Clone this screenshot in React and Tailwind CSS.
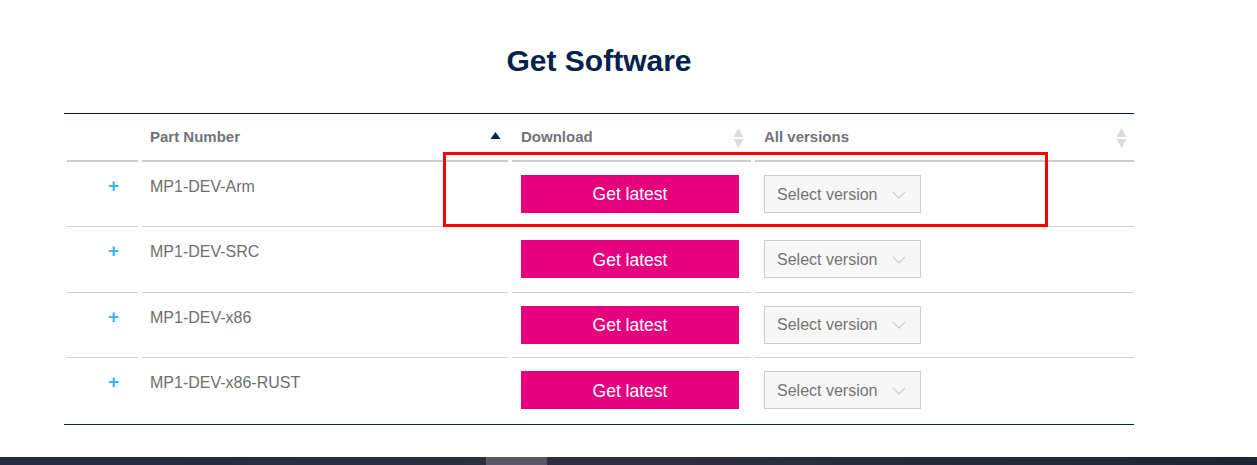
import React from "react";

const rows = ["MP1-DEV-Arm", "MP1-DEV-SRC", "MP1-DEV-x86", "MP1-DEV-x86-RUST"];

function SortBoth() {
  return (
    <svg width="11" height="20" viewBox="0 0 11 20" className="shrink-0">
      <path d="M5.5 0 L10.5 9 L0.5 9 Z" fill="#dcdcdc" />
      <path d="M0.5 11 L10.5 11 L5.5 20 Z" fill="#dcdcdc" />
    </svg>
  );
}

function SortUp() {
  return (
    <svg width="11" height="7" viewBox="0 0 11 7" className="shrink-0 mb-[5px]">
      <path d="M5.5 0 L10.5 7 L0.5 7 Z" fill="#03234b" />
    </svg>
  );
}

function Chevron() {
  return (
    <svg width="14" height="8" viewBox="0 0 14 8">
      <path d="M1 1 L7 7 L13 1" fill="none" stroke="#cfcfcf" strokeWidth="1.3" />
    </svg>
  );
}

export default function App() {
  const cols = "grid grid-cols-[71px_366px_239px_379px] gap-x-[4px] pl-[3px]";
  return (
    <div className="w-[1257px] h-[465px] bg-white relative overflow-hidden flex flex-col" style={{ fontFamily: '"Liberation Sans", Arial, sans-serif' }}>
      <div className="ml-[64px] w-[1070px] flex flex-col">
        <h1 className="text-center text-[30px] font-bold text-[#03234b] pt-[43px] leading-[36px] h-[113px]">
          Get Software
        </h1>
        <div className="border-t border-b border-[#03234b] relative">
          {/* header */}
          <div className={cols}>
            <div className="h-[48px] border-b-2 border-[#cdcdcd]" />
            <div className="h-[48px] border-b-2 border-[#cdcdcd] flex items-center justify-between pl-[8px] pr-[7px] pt-[1px]">
              <span className="text-[15px] font-bold text-[#727379]">Part Number</span>
              <SortUp />
            </div>
            <div className="h-[48px] border-b-2 border-[#cdcdcd] flex items-center justify-between pl-[9px] pr-[7px] pt-[1px]">
              <span className="text-[15px] font-bold text-[#727379]">Download</span>
              <SortBoth />
            </div>
            <div className="h-[48px] border-b-2 border-[#cdcdcd] flex items-center justify-between pl-[9px] pr-[7px] pt-[1px]">
              <span className="text-[15px] font-bold text-[#727379]">All versions</span>
              <SortBoth />
            </div>
          </div>
          {rows.map((name, i) => {
            const last = i === rows.length - 1;
            const b = last ? "" : "border-b border-[#d2d2d2]";
            return (
              <div key={name} className={cols}>
                <div className={`h-[65.4px] ${b} text-right pr-[19px] pt-[13px]`}>
                  <span className="text-[19px] font-bold text-[#3cb4e6] leading-[22px]">+</span>
                </div>
                <div className={`h-[65.4px] ${b} pl-[8px] pt-[13px]`}>
                  <span className="text-[16px] text-[#6e6e6e] leading-[22px]">{name}</span>
                </div>
                <div className={`h-[65.4px] ${b} pl-[9px] pt-[13px]`}>
                  <button className="w-[218px] h-[38px] bg-[#e6007e] text-white text-[17.5px] flex items-center justify-center pt-[1px]">
                    Get latest
                  </button>
                </div>
                <div className={`h-[65.4px] ${b} pl-[9px] pt-[13px]`}>
                  <div className="w-[157px] h-[38px] bg-[#f7f7f7] border border-[#cccccc] flex items-center justify-between pl-[12px] pr-[14px] pt-[1px]">
                    <span className="text-[16px] text-[#747474]">Select version</span>
                    <Chevron />
                  </div>
                </div>
              </div>
            );
          })}
        </div>
      </div>
      {/* red highlight box */}
      <div className="absolute left-[443px] top-[152px] w-[605px] h-[75px] border-[3px] border-[#ff0000] pointer-events-none" />
      {/* bottom dark strip */}
      <div className="absolute left-0 right-0 bottom-0 h-[8px] flex bg-gradient-to-r from-[#252a3e] via-[#2f2e40] to-[#1f2434]">
        <div className="ml-[486px] w-[61px] bg-[#5a5867]" />
      </div>
    </div>
  );
}
